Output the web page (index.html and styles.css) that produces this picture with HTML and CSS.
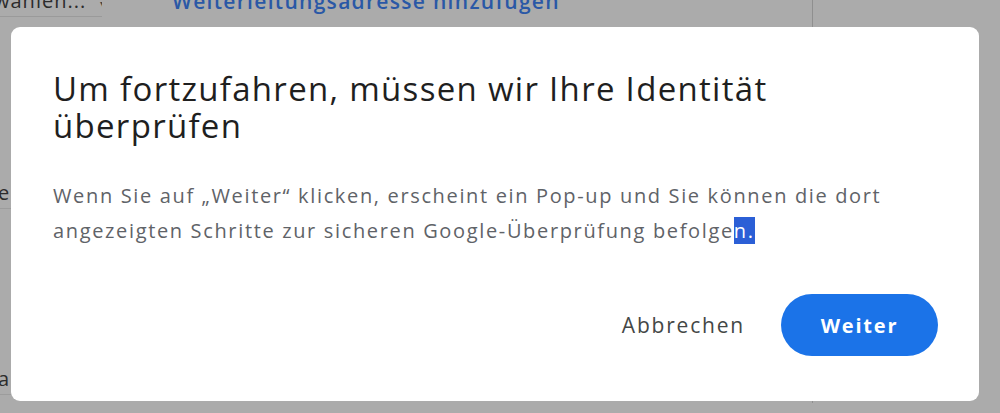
FILE: index.html
```html
<!DOCTYPE html>
<html lang="de">
<head>
<meta charset="utf-8">
<link rel="stylesheet" href="styles.css">
</head>
<body>
<div class="page">
  <div class="topbar">
    <div class="select">wählen... <span class="caret">▾</span></div>
    <div class="link">Weiterleitungsadresse hinzufügen</div>
  </div>
  <div class="sidecol">
    <div class="side-item one">e</div>
    <div class="side-item two">a</div>
  </div>
  <div class="vline"></div>
</div>

<div class="dialog" role="dialog">
  <h1 class="title">Um fortzufahren, müssen wir Ihre Identität überprüfen</h1>
  <p class="body">Wenn Sie auf „Weiter“ klicken, erscheint ein Pop-up und Sie können die dort angezeigten Schritte zur sicheren Google-Überprüfung befolge<span class="sel">n.</span></p>
  <div class="actions">
    <button class="btn-text">Abbrechen</button>
    <button class="btn-primary">Weiter</button>
  </div>
</div>
</body>
</html>
```

FILE: styles.css
```css
html, body {
  margin: 0;
  padding: 0;
  width: 1000px;
  height: 413px;
  overflow: hidden;
  background: #ababab;
  font-family: "Open Sans", "Roboto", sans-serif;
}

.page {
  position: relative;
  width: 1000px;
  height: 413px;
}

.topbar {
  display: flex;
  align-items: flex-start;
  margin-top: -10px;
  gap: 70px;
}

.select {
  width: 108px;
  margin-left: -6px;
  padding-bottom: 1px;
  border-bottom: 1px solid #9a9a9a;
  font-size: 20px;
  line-height: 22px;
  letter-spacing: 1px;
  color: #2c2c2c;
  white-space: nowrap;
  overflow: hidden;
}

.caret {
  font-size: 12px;
  margin-left: 8px;
  color: #444;
}

.link {
  font-size: 21px;
  line-height: 22px;
  font-weight: 600;
  letter-spacing: 1.3px;
  color: #2a58a6;
  white-space: nowrap;
}

.sidecol {
  width: 40px;
  display: flex;
  flex-direction: column;
}

.side-item {
  font-size: 20px;
  line-height: 24px;
  color: #2c2c2c;
  margin-left: -2px;
  border-bottom: 1px solid #9c9c9c;
  padding-bottom: 3px;
}

.side-item.one { margin-top: 164px; }
.side-item.two { margin-top: 158px; }

.vline {
  position: absolute;
  left: 812px;
  top: 0;
  width: 1px;
  height: 413px;
  background: #8f8f8f;
}

.dialog {
  position: absolute;
  left: 11px;
  top: 27px;
  width: 968px;
  height: 374px;
  box-sizing: border-box;
  background: #ffffff;
  border-radius: 9px;
  padding: 43px 41px 0 42px;
  display: flex;
  flex-direction: column;
}

.title {
  margin: 0;
  font-size: 33px;
  line-height: 37px;
  font-weight: 400;
  letter-spacing: 1.3px;
  color: #1f1f1f;
  max-width: 760px;
}

.body {
  margin: 34px 0 0 0;
  font-size: 20px;
  line-height: 35px;
  letter-spacing: 1.65px;
  color: #5f6368;
  max-width: 860px;
}

.sel {
  background: #2b5fd6;
  color: #ffffff;
}

.actions {
  margin-top: auto;
  margin-bottom: 45px;
  display: flex;
  justify-content: flex-end;
  align-items: center;
  gap: 12px;
}

.btn-text {
  border: none;
  background: none;
  font-family: inherit;
  font-size: 21px;
  letter-spacing: 1.8px;
  color: #444746;
  padding: 0 24px;
  height: 62px;
  cursor: pointer;
}

.btn-primary {
  border: none;
  background: #1b73e8;
  color: #ffffff;
  font-family: inherit;
  font-size: 20px;
  font-weight: 700;
  letter-spacing: 1.8px;
  width: 157px;
  height: 62px;
  border-radius: 31px;
  cursor: pointer;
}
```
